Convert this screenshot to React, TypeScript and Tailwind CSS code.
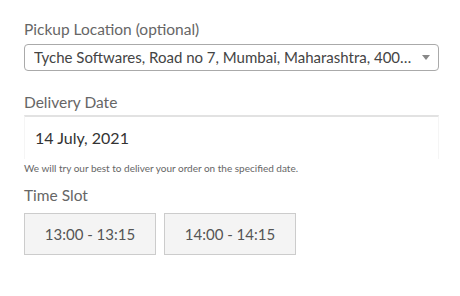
import React from "react";

export default function App() {
  const slots = ["13:00 - 13:15", "14:00 - 14:15"];
  return (
    <div
      className="w-[460px] h-[296px] bg-white px-[24px] pt-[18px] text-[#666]"
      style={{ fontFamily: "Lato, 'Open Sans', sans-serif" }}
    >
      {/* pickup location */}
      <label className="block text-[15.5px] leading-[22px] text-[#666]">Pickup Location (optional)</label>
      <div className="mt-[4px] w-[415px] h-[27px] flex items-center justify-between border border-[#aaa] rounded-[4px] pl-[9px] pr-[8px]">
        <span className="text-[15px] text-[#444] truncate">Tyche Softwares, Road no 7, Mumbai, Maharashtra, 400…</span>
        <svg width="8" height="5" viewBox="0 0 8 5" className="ml-[10px] shrink-0">
          <path d="M0 0 L8 0 L4 5 Z" fill="#888" />
        </svg>
      </div>

      {/* delivery date */}
      <label className="block mt-[20px] text-[15.5px] leading-[22px] text-[#666]">Delivery Date</label>
      <div className="mt-[2px] w-[415px] h-[44px] flex items-center border-t-2 border-t-[#e2e2e2] border-x border-x-[#f5f5f5] px-[10px]">
        <span className="text-[16px] text-[#333]">14 July, 2021</span>
      </div>
      <p className="mt-[2px] text-[10px] leading-[14px] text-[#666]">We will try our best to deliver your order on the specified date.</p>

      {/* time slot */}
      <label className="block mt-[9px] text-[15.5px] leading-[22px] text-[#666]">Time Slot</label>
      <div className="mt-[7px] flex gap-[8px]">
        {slots.map((s) => (
          <button
            key={s}
            className="w-[132px] h-[42px] bg-[#f4f4f4] border border-[#ccc] text-[15px] text-[#555]"
          >
            {s}
          </button>
        ))}
      </div>
    </div>
  );
}
